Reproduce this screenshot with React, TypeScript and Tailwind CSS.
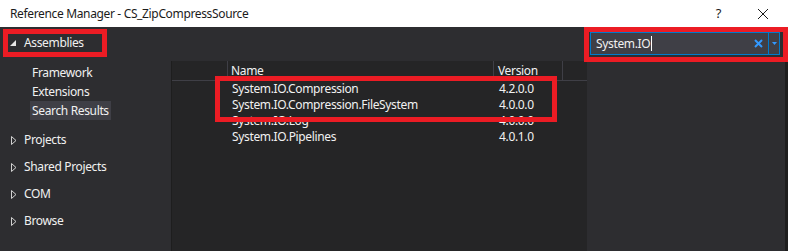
import type { ReactNode } from 'react'

const rows = [
  { name: 'System.IO.Compression', version: '4.2.0.0' },
  { name: 'System.IO.Compression.FileSystem', version: '4.0.0.0' },
  { name: 'System.IO.Log', version: '4.0.0.0' },
  { name: 'System.IO.Pipelines', version: '4.0.1.0' },
]

function Collapsed() {
  return (
    <svg width="6" height="9" viewBox="0 0 6 9" aria-hidden="true" className="shrink-0">
      <path d="M0.5 0.5 L5 4.5 L0.5 8.5 Z" fill="none" stroke="#d0d0d0" strokeWidth="1" />
    </svg>
  )
}

function TreeNode({ children }: { children: ReactNode }) {
  return (
    <div className="flex h-[20px] items-center gap-[7px] pl-[11px]">
      <Collapsed />
      <span>{children}</span>
    </div>
  )
}

export default function App() {
  return (
    <div className="relative h-[251px] w-[788px] overflow-hidden font-['Noto_Sans',sans-serif] text-[12px] tracking-[-0.35px]">
      <div className="flex h-[27px] items-center bg-white pl-[10px] text-[#1b1b1b]">
        <span>Reference Manager - CS_ZipCompressSource</span>
        <span className="ml-auto mr-[36px] text-[13px]">?</span>
        <svg width="12" height="12" viewBox="0 0 12 12" aria-hidden="true" className="mr-[19px]">
          <path d="M1 1 L11 11 M11 1 L1 11" stroke="#1b1b1b" strokeWidth="1" />
        </svg>
      </div>

      <div className="flex h-[224px] bg-[#2d2d30] text-[#f1f1f1]">
        <aside className="w-[171px] shrink-0 pt-[7px]">
          <div className="flex h-[18px] items-center gap-[8px] pl-[10px]">
            <svg width="6" height="6" viewBox="0 0 6 6" aria-hidden="true">
              <path d="M6 0 L6 6 L0 6 Z" fill="#e6e6e6" />
            </svg>
            <span>Assemblies</span>
          </div>
          <div className="mt-[11px] flex flex-col">
            <div className="flex h-[19px] items-center pl-[32px]">Framework</div>
            <div className="flex h-[19px] items-center pl-[32px]">Extensions</div>
            <div className="flex h-[19px] items-center pl-[30px]">
              <span className="bg-[#3f3f46] px-[2px] leading-[19px]">Search Results</span>
            </div>
          </div>
          <div className="mt-[10px] flex flex-col gap-[7px]">
            <TreeNode>Projects</TreeNode>
            <TreeNode>Shared Projects</TreeNode>
            <TreeNode>COM</TreeNode>
            <TreeNode>Browse</TreeNode>
          </div>
        </aside>

        <div className="flex flex-1 flex-col">
          <div className="flex h-[34px] shrink-0 justify-end pr-[5px] pt-[5px]">
            <div className="flex h-[23px] w-[190px] items-center border border-[#007acc] bg-[#3f3f46]">
              <span className="pl-[5px]">System.IO</span>
              <span className="ml-[1px] h-[15px] w-px bg-white" />
              <svg width="9" height="9" viewBox="0 0 9 9" aria-hidden="true" className="ml-auto mr-[5px]">
                <path d="M1 1 L8 8 M8 1 L1 8" stroke="#3399ff" strokeWidth="2" />
              </svg>
              <div className="flex h-full w-[11px] items-center justify-center border-l border-[#007acc]">
                <svg width="5" height="3" viewBox="0 0 5 3" aria-hidden="true">
                  <path d="M0 0 L5 0 L2.5 3 Z" fill="#3399ff" />
                </svg>
              </div>
            </div>
          </div>

          <div className="flex flex-1">
            <div className="w-[416px] border-l border-[#1e1e1e] bg-[#252526]">
              <div className="flex h-[20px] border-b border-[#3f3f46]">
                <div className="w-[56px] border-r border-[#3f3f46]" />
                <div className="flex w-[266px] items-center border-r border-[#3f3f46] pl-[3px]">Name</div>
                <div className="flex w-[69px] items-center border-r border-[#3f3f46] pl-[4px]">Version</div>
              </div>
              {rows.map((r) => (
                <div key={r.name} className="flex h-[16px] items-center">
                  <div className="w-[60px]" />
                  <div className="w-[267px]">{r.name}</div>
                  <div>{r.version}</div>
                </div>
              ))}
            </div>
            <div className="flex-1" />
          </div>
        </div>

        <div className="w-[3px] shrink-0 bg-[#1e1e1e]" />
      </div>

      {/* red annotation boxes */}
      <div className="absolute left-[3px] top-[29px] h-[28px] w-[104px] border-[5px] border-[#ec1c24]" />
      <div className="absolute left-[584px] top-[27px] h-[35px] w-[204px] border-[5px] border-[#ec1c24]" />
      <div className="absolute left-[215px] top-[76px] h-[46px] w-[342px] border-[5px] border-[#ec1c24]" />
    </div>
  )
}
